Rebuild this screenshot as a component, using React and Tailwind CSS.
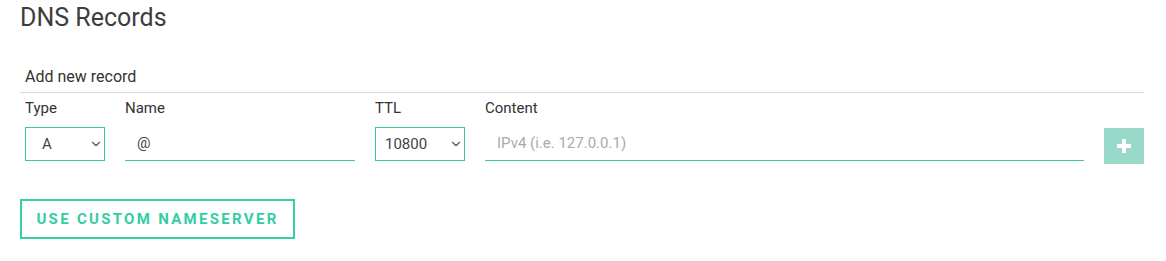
import { ChevronDown } from 'lucide-react';

const SelectBox = ({ value, width, pad }) => (
  <div className={`${width} ${pad} h-[34px] border border-[#3cc6a6] flex items-center justify-between pr-[1px] text-[15px] text-[#444]`}>
    <span>{value}</span>
    <ChevronDown size={14} strokeWidth={2} className="text-[#555]" />
  </div>
);

export default function App() {
  return (
    <div className="bg-white w-[1166px] h-[261px] px-5 pt-[3px] font-['Roboto',sans-serif] text-[#333]">
      <h1 className="text-[25px] leading-[30px] text-[#3d3d3d] font-normal">DNS Records</h1>

      <div className="mt-[35px] w-[1124px]">
        <div className="pl-[5px] pb-[7px] text-[16px] leading-[17px] text-[#333] border-b border-[#dcdcdc]">
          Add new record
        </div>

        <div className="flex items-start gap-5 pl-[5px] pt-[6px]">
          <div className="flex flex-col">
            <label className="text-[15px] leading-[18px] h-[28px] text-[#333]">Type</label>
            <SelectBox value="A" width="w-[80px]" pad="pl-[16px]" />
          </div>
          <div className="flex flex-col">
            <label className="text-[15px] leading-[18px] h-[28px] text-[#333]">Name</label>
            <div className="w-[230px] h-[34px] border-b border-[#3cc6a6] flex items-center pl-[12px] text-[15px] text-[#444]">
              @
            </div>
          </div>
          <div className="flex flex-col">
            <label className="text-[15px] leading-[18px] h-[28px] text-[#333]">TTL</label>
            <SelectBox value="10800" width="w-[90px]" pad="pl-[9px]" />
          </div>
          <div className="flex flex-col">
            <label className="text-[15px] leading-[18px] h-[28px] text-[#333]">Content</label>
            <div className="w-[599px] h-[34px] border-b border-[#3cc6a6] flex items-center pl-[12px] text-[15px] text-[#aaa]">
              IPv4 (i.e. 127.0.0.1)
            </div>
          </div>
          <button className="mt-[29px] w-[40px] h-[36px] bg-[#99d9c9] flex items-center justify-center">
            <svg width="14" height="14" viewBox="0 0 14 14">
              <rect x="5" y="0" width="4" height="14" fill="white" />
              <rect x="0" y="5" width="14" height="4" fill="white" />
            </svg>
          </button>
        </div>

        <button className="mt-[35px] w-[275px] h-[40px] border-2 border-[#33d0a8] text-[#33cda5] text-[15px] font-bold tracking-[2.3px] flex items-center justify-center">
          USE CUSTOM NAMESERVER
        </button>
      </div>
    </div>
  );
}
